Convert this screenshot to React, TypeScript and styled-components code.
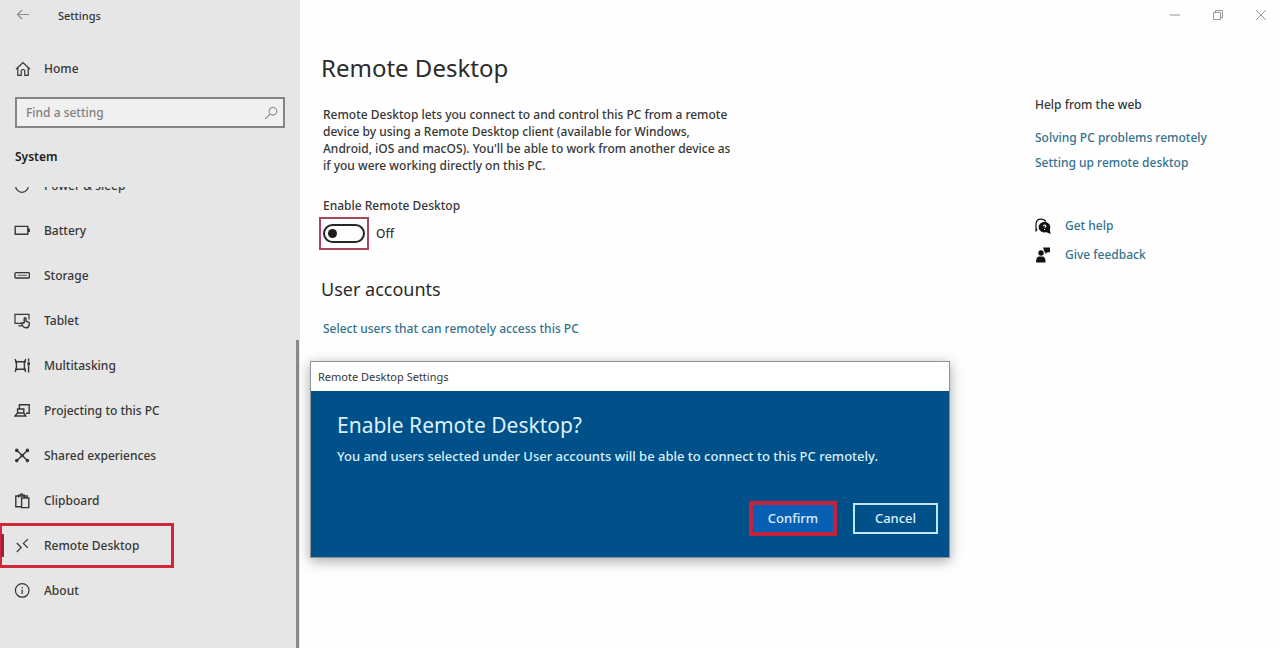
import React from "react";
import styled, { createGlobalStyle } from "styled-components";

const GlobalStyle = createGlobalStyle`
  *, *::before, *::after { box-sizing: border-box; }
  body {
    margin: 0;
    background: #fefefe;
    color: #363636;
    font-family: "Noto Sans", "Open Sans", sans-serif;
    font-size: 12px;
    font-weight: 500;
    line-height: 17px;
  }
  h1, h2, p, ul { margin: 0; padding: 0; }
  h1, h2 { color: #2b2b2b; font-weight: 400; }
  button, input { font: inherit; color: inherit; }
`;

const Window = styled.div`
  display: grid;
  grid-template-columns: 300px minmax(0, 1fr);
  height: 100vh;
`;

const Sidebar = styled.aside`
  display: flex;
  flex-direction: column;
  min-height: 0;
  background: #e6e6e6;
`;

const TitleBar = styled.header`
  display: flex;
  align-items: center;
  height: 30px;
  padding-left: 15px;
  gap: 27px;
  font-size: 11px;
`;

const IconButton = styled.button<{ $width: number }>`
  display: flex;
  align-items: center;
  justify-content: center;
  width: ${(p) => p.$width}px;
  height: 30px;
  padding: 0;
  border: 0;
  background: none;
  color: #8c8c8c;
`;

const Svg = styled.svg`
  display: block;
  flex: none;
  fill: none;
  stroke: currentColor;
`;

const HomeLink = styled.a`
  display: flex;
  align-items: center;
  gap: 13px;
  margin: 16px 0 0 15px;
  height: 45px;
  color: inherit;
  text-decoration: none;
`;

const SearchBox = styled.label`
  display: flex;
  align-items: center;
  flex: none;
  margin: 6px 15px 0;
  height: 31px;
  padding: 0 5px 0 9px;
  border: 2px solid #858585;
  background: #f0f0f0;
  color: #858585;
`;

const SearchInput = styled.input`
  flex: 1;
  min-width: 0;
  padding: 0;
  border: 0;
  outline: 0;
  background: none;
  &::placeholder { color: #808080; opacity: 1; }
`;

const Category = styled.h2`
  margin: 20px 15px 0;
  color: #1c1c1c;
  font-size: 12px;
  font-weight: 600;
`;

const Nav = styled.nav`
  position: relative;
  flex: 1;
  min-height: 0;
  margin-top: 22px;
  overflow: hidden;
`;

const NavList = styled.ul`
  margin-top: -24px;
  list-style: none;
`;

const NavLink = styled.a<{ $current?: boolean }>`
  position: relative;
  display: flex;
  align-items: center;
  gap: 14px;
  width: ${(p) => (p.$current ? "174px" : "auto")};
  height: 45px;
  padding-left: ${(p) => (p.$current ? "12px" : "14px")};
  border: ${(p) => (p.$current ? "3px solid #d4263a" : "0")};
  border-left-width: ${(p) => (p.$current ? "2px" : "0")};
  color: inherit;
  text-decoration: none;

  &::before {
    content: "";
    display: ${(p) => (p.$current ? "block" : "none")};
    position: absolute;
    top: 8px;
    left: -1px;
    width: 3px;
    height: 23px;
    background: #8c2747;
  }
`;

const ScrollThumb = styled.div`
  position: absolute;
  top: 153px;
  right: 1px;
  bottom: 0;
  width: 3px;
  background: #8a8a8a;
`;

const Main = styled.main`
  position: relative;
  display: flex;
  flex-direction: column;
`;

const WindowControls = styled.div`
  display: flex;
  justify-content: flex-end;
  gap: 5px;
  height: 32px;
`;

const Columns = styled.div`
  display: flex;
  justify-content: space-between;
  padding-left: 23px;
`;

const Content = styled.section`
  display: flex;
  flex-direction: column;
  align-items: flex-start;
`;

const Title = styled.h1`
  margin-top: 19px;
  margin-left: -2px;
  font-size: 24px;
  line-height: 34px;
`;

const Description = styled.p`
  margin-top: 21px;
`;

const SwitchLabel = styled.label`
  margin-top: 23px;
`;

const SwitchRow = styled.div`
  display: flex;
  align-items: center;
  gap: 7px;
  margin: 3px 0 0 -4px;
`;

const SwitchFrame = styled.span`
  display: flex;
  padding: 5px 2px;
  border: 2px solid #a8485c;
`;

const Switch = styled.input`
  display: flex;
  align-items: center;
  appearance: none;
  width: 42px;
  height: 19px;
  margin: 0;
  padding-left: 3px;
  border: 2px solid #262626;
  border-radius: 10px;
  &::before {
    content: "";
    width: 9px;
    height: 9px;
    border-radius: 50%;
    background: #1c1c1c;
  }
`;

const Subtitle = styled.h2`
  margin-top: 27px;
  margin-left: -2px;
  font-size: 18px;
  line-height: 24px;
`;

const Link = styled.a`
  color: #33728e;
  text-decoration: none;
`;

const AccountsLink = styled(Link)`
  margin-top: 19px;
`;

const Help = styled.aside`
  display: flex;
  flex-direction: column;
  width: 245px;
  padding-top: 64px;
`;

const HelpLinks = styled.div`
  display: flex;
  flex-direction: column;
  gap: 8px;
  margin-top: 16px;
`;

const Support = styled.div`
  display: flex;
  flex-direction: column;
  gap: 12px;
  margin-top: 46px;
`;

const SupportLink = styled(Link)`
  display: flex;
  align-items: center;
  gap: 14px;
  svg { color: #111; }
`;

const Dialog = styled.div`
  position: absolute;
  top: 361px;
  left: 10px;
  width: 640px;
  border: 1px solid #8f9499;
  background: #fff;
  box-shadow: 0 3px 12px rgba(0, 0, 0, 0.35);
`;

const DialogBar = styled.header`
  padding: 6px 7px;
  font-size: 11px;
  font-weight: 400;
`;

const DialogBody = styled.div`
  display: flex;
  flex-direction: column;
  padding: 18px 11px 21px 26px;
  background: #00508a;
  color: #dcf0fc;
  font-size: 13px;
`;

const DialogTitle = styled.h2`
  color: inherit;
  font-size: 21px;
  line-height: 32px;
`;

const DialogText = styled.p`
  margin-top: 7px;
`;

const Actions = styled.div`
  display: flex;
  align-items: center;
  justify-content: flex-end;
  gap: 16px;
  margin-top: 36px;
`;

const ActionButton = styled.button<{ $primary?: boolean }>`
  width: ${(p) => (p.$primary ? "88px" : "85px")};
  height: ${(p) => (p.$primary ? "35px" : "31px")};
  padding: 0;
  border: ${(p) => (p.$primary ? "4px solid #c5233d" : "2px solid #c4e6fa")};
  background: ${(p) => (p.$primary ? "#0760b4" : "#00508a")};
`;

type IconProps = { children: React.ReactNode; size?: number };

const Icon = ({ children, size = 16 }: IconProps) => (
  <Svg width={size} height={size} viewBox="0 0 16 16" strokeWidth="1.2" aria-hidden="true">
    {children}
  </Svg>
);

const navItems: { label: string; icon: React.ReactNode; current?: boolean }[] = [
  {
    label: "Power & sleep",
    icon: <path d="M4.5 2.8a6.3 6.3 0 1 0 7 0M8 1v7" />,
  },
  {
    label: "Battery",
    icon: <path d="M1.2 3.4h12.6v7.8H1.2zM15.2 5.6v3.4" strokeWidth="1.4" />,
  },
  {
    label: "Storage",
    icon: (
      <>
        <rect x="1" y="4.6" width="14.4" height="5.4" rx="1" strokeWidth="1.4" />
        <path d="M3.4 7.3h9.6" strokeWidth="0.8" />
      </>
    ),
  },
  {
    label: "Tablet",
    icon: (
      <>
        <path d="M7 10.4H1V1.4h14v5M4.4 12.8H8" />
        <path d="M10.2 10.6V5.4q.9-1.2 1.8 0v2.8l3.2 1.2v2.4q-.4 3-3.2 3-2.4 0-3.4-2L7.4 10q1.2-1 2.8.6" strokeWidth="1.4" />
      </>
    ),
  },
  {
    label: "Multitasking",
    icon: (
      <>
        <path d="M2.4 3.8h8v7.4h-8zM1 1.2l1.4 2.6M11.8 1.2l-1.4 2.6M1 13.8l1.4-2.6M11.8 13.8l-1.4-2.6M1 3.8h11M1 11.2h11M14.6.6v3M14.6 8v6.4" strokeWidth="1.4" />
        <path d="M14 4.8h1.4v2H14z" fill="currentColor" />
      </>
    ),
  },
  {
    label: "Projecting to this PC",
    icon: <path d="M5.4 5.6V1.8h9.8v8.4H12M3.6 6h6.2v4H3.6zM3.6 10L1 13h10.8l-2-3" strokeWidth="1.4" />,
  },
  {
    label: "Shared experiences",
    icon: (
      <>
        <path d="M3 2.4l10.4 10M13.4 2.4L3 12.4" strokeWidth="1.4" />
        <g fill="currentColor">
          <circle cx="2.8" cy="2.4" r="1.2" />
          <circle cx="13.4" cy="2.4" r="1.2" />
          <circle cx="2.8" cy="12.6" r="1.2" />
          <circle cx="13.4" cy="12.6" r="1.2" />
          <circle cx="8.2" cy="7.5" r="1.2" />
        </g>
      </>
    ),
  },
  {
    label: "Clipboard",
    icon: <path d="M7 13.8H1.8V3h11.4v2M4.6 4.6V2.2h1.6Q7.5-.6 8.9 2.2h1.5v2.4M7.6 5h7.2v9.6H7.6z" strokeWidth="1.4" />,
  },
  {
    label: "Remote Desktop",
    current: true,
    icon: <path d="M2.8 5l4.4 4.6-4.4 4.4M13.8 1.2L9.4 5.4l4.4 4.4" />,
  },
  {
    label: "About",
    icon: (
      <>
        <circle cx="8.2" cy="7.4" r="6.8" />
        <path d="M8.2 6.4v4.6M8.2 3.9v1.3" />
      </>
    ),
  },
];

export default function App() {
  return (
    <>
      <GlobalStyle />
      <Window>
        <Sidebar>
          <TitleBar>
            <IconButton $width={16} aria-label="Back">
              <Icon>
                <path d="M14 7.5H2.5M7 3L2.5 7.5 7 12" />
              </Icon>
            </IconButton>
            <span>Settings</span>
          </TitleBar>
          <HomeLink href="#home">
            <Icon>
              <path d="M1 8.2L8 1.6l7 6.6M2.8 6.8v7.6h3.4V9.6q1.8-2.2 3.6 0v4.8h3.4V6.8" />
            </Icon>
            Home
          </HomeLink>
          <SearchBox>
            <SearchInput type="text" placeholder="Find a setting" aria-label="Find a setting" />
            <Icon size={14}>
              <circle cx="10.2" cy="6" r="4.4" />
              <path d="M7 9.2L1.4 14.8" />
            </Icon>
          </SearchBox>
          <Category>System</Category>
          <Nav aria-label="System">
            <NavList>
              {navItems.map((item) => (
                <li key={item.label}>
                  <NavLink href="#" $current={item.current}>
                    <Icon>{item.icon}</Icon>
                    {item.label}
                  </NavLink>
                </li>
              ))}
            </NavList>
            <ScrollThumb />
          </Nav>
        </Sidebar>
        <Main>
          <WindowControls>
            <IconButton $width={38} aria-label="Minimize">
              <Icon size={12}><path d="M1 8h14" /></Icon>
            </IconButton>
            <IconButton $width={38} aria-label="Restore">
              <Icon size={12}><path d="M2 4.6h9.4V14H2zM4.6 4.6V2H14v9.4h-2.6" /></Icon>
            </IconButton>
            <IconButton $width={38} aria-label="Close">
              <Icon size={12}><path d="M1.5 1.5l13 13M14.5 1.5l-13 13" /></Icon>
            </IconButton>
          </WindowControls>
          <Columns>
            <Content>
              <Title>Remote Desktop</Title>
              <Description>
                Remote Desktop lets you connect to and control this PC from a remote
                <br />
                device by using a Remote Desktop client (available for Windows,
                <br />
                Android, iOS and macOS). You'll be able to work from another device as
                <br />
                if you were working directly on this PC.
              </Description>
              <SwitchLabel htmlFor="remote">Enable Remote Desktop</SwitchLabel>
              <SwitchRow>
                <SwitchFrame>
                  <Switch id="remote" type="checkbox" role="switch" />
                </SwitchFrame>
                <span>Off</span>
              </SwitchRow>
              <Subtitle>User accounts</Subtitle>
              <AccountsLink href="#users">Select users that can remotely access this PC</AccountsLink>
            </Content>
            <Help>
              <p>Help from the web</p>
              <HelpLinks>
                <Link href="#solving">Solving PC problems remotely</Link>
                <Link href="#setup">Setting up remote desktop</Link>
              </HelpLinks>
              <Support>
                <SupportLink href="#help">
                  <Icon>
                    <path d="M2.2 10.8L1 12.6V6Q1.4 1.2 6 1.2q3.4 0 4.8 2.4" />
                    <path d="M9.6 4.6a5 4.6 0 1 0 1.6 8.8l3.6 1.6-.6-3.6a4.8 4.8 0 0 0-4.6-6.8z" fill="currentColor" />
                    <path d="M8.2 7.8q1.6-1.6 2.6 0 .2 1-1.2 1.8M9.6 11v1" stroke="#fff" />
                  </Icon>
                  Get help
                </SupportLink>
                <SupportLink href="#feedback">
                  <Icon>
                    <g fill="currentColor" stroke="none">
                      <circle cx="6" cy="6" r="2.7" />
                      <path d="M1 15.4q0-5.8 3.4-5.8h2.8q3.4 0 3.4 5.8zM8 .4h7v4.8h-2.4L10.4 7V5.2H9.6z" />
                    </g>
                  </Icon>
                  Give feedback
                </SupportLink>
              </Support>
            </Help>
          </Columns>
          <Dialog role="dialog" aria-labelledby="dialog-title">
            <DialogBar>Remote Desktop Settings</DialogBar>
            <DialogBody>
              <DialogTitle id="dialog-title">Enable Remote Desktop?</DialogTitle>
              <DialogText>
                You and users selected under User accounts will be able to connect to this PC remotely.
              </DialogText>
              <Actions>
                <ActionButton $primary>Confirm</ActionButton>
                <ActionButton>Cancel</ActionButton>
              </Actions>
            </DialogBody>
          </Dialog>
        </Main>
      </Window>
    </>
  );
}
